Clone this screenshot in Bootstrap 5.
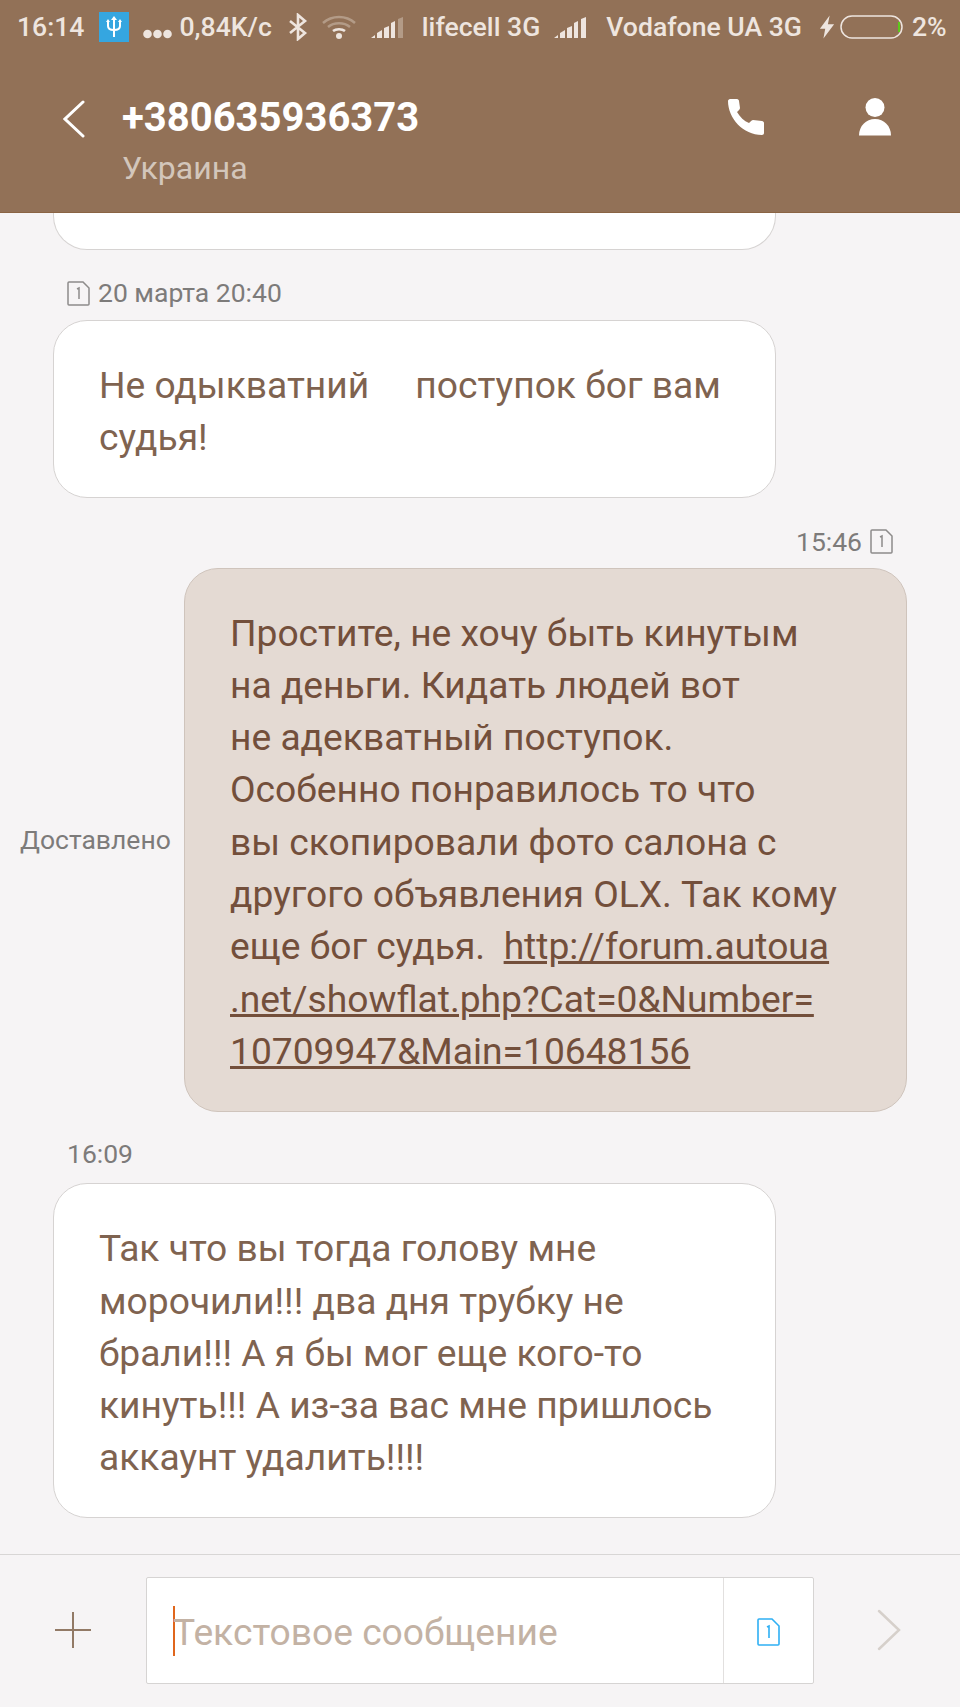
<!DOCTYPE html>
<html lang="ru">
<head>
<meta charset="utf-8">
<title>SMS</title>
<link href="https://cdn.jsdelivr.net/npm/bootstrap@5.3.0/dist/css/bootstrap.min.css" rel="stylesheet">
<style>
html,body{height:100%;margin:0}
body{font-family:Roboto,"Noto Sans",sans-serif;background:#f6f4f5;width:960px;height:1707px;overflow:hidden}
.shell{height:1707px}
.topbar{background:#927157;height:213px;flex:none;border-bottom:1px solid #8a6444}
.statusline{height:54px;padding:0 0 0 17px;color:#eee5df;font-size:26.6px;font-weight:500;white-space:nowrap}
.usbbox{width:30px;height:30px;background:#35a6e0;margin:0 14px 0 15px}
.dotline{margin:14px 7px 0 0}
.sgap5{margin-left:5px}
.sgap8{margin-left:8px}
.sgap13{margin-left:13px}
.sgap14{margin-left:14px}
.sgap16{margin-left:16px}
.sgap17{margin-left:17px}
.sgap18{margin-left:18px}
.titlerow{padding:41px 0 0 63px}
.backwrap{width:59px;padding-top:5px}
.phone-no{font-size:40px;font-weight:700;color:#fff;line-height:46px}
.region{font-size:32px;color:#d3c6bb;line-height:36px;margin-top:9px}
.call-ico{position:absolute;left:728px;top:98px}
.person-ico{position:absolute;left:859px;top:98px}
.convo{padding:0 53px;height:1341px;overflow:hidden}
.bubble{width:723px;background:#fff;border:1px solid #d6d3d2;border-radius:34px;padding:38px 45px 33px;font-size:37.2px;line-height:52.3px;color:#7f6350;white-space:nowrap}
.bubble-stub{height:38px;margin-top:-1px;border-top:0;border-radius:0 0 34px 34px;padding:0}
.stamp{font-size:26.5px;color:#7d7b7a;line-height:30px;margin-left:14px;height:30px}
.stamp-first{margin-top:28px;margin-bottom:12px}
.stamp-late{margin-top:27px;margin-bottom:14px}
.mine{background:#e4dad3;border-color:#cfc4bc;color:#734f3b;padding-bottom:34px}
.mine a{color:#734f3b}
.sentstamp{margin:29px 14px 11px 14px;justify-content:flex-end}
.deliv{font-size:26.5px;color:#7d7b7a;margin-left:-33px;margin-right:13px;width:151px;flex:none;white-space:nowrap}
.composer{height:153px;flex:none;border-top:1px solid #d8d6d5;padding:22px 0 0 0}
.plusbox{width:146px;height:106px}
.inputbox{width:668px;height:107px;background:#fff;border:1px solid #d6d4d3;border-radius:2px}
.caret-mark{width:2px;height:50px;background:#e0661c;margin-left:26px;flex:none}
.hint-text{font-size:37.2px;color:#c3b2a4;line-height:50px;margin:3px 0 0 -2px}
.siminput{width:90px;border-left:1px solid #e2e0df;padding-top:3px}
.sendbox{width:146px;height:106px;padding-left:4px}
</style>
</head>
<body>
<div class="shell d-flex flex-column position-relative">
  <header class="topbar position-relative">
    <div class="statusline d-flex align-items-center">
      <span>16:14</span>
      <span class="usbbox d-flex align-items-center justify-content-center">
        <svg width="18" height="22" viewBox="0 0 18 22" fill="none" stroke="#fff" stroke-width="2"><path d="M9 3v18M3 6v4c0 3 2.500 4 6 4s6-1 6-4V6"/><path d="M9 0l3 4H6zM3 3l2 3H1zM15 3l2 3h-4z" fill="#fff" stroke="none"/></svg>
      </span>
      <svg class="dotline" width="29" height="10" viewBox="0 0 29 10" fill="#eee5df"><circle cx="4.500" cy="5" r="4.300"/><circle cx="14.500" cy="5" r="4.300"/><circle cx="24.500" cy="5" r="4.300"/></svg>
      <span>0,84K/c</span>
      <svg class="sgap16" width="20" height="28" viewBox="0 0 20 28" fill="none" stroke="#eee5df" stroke-width="2.600"><path d="M2 8l15 12-7 6V2l7 6L2 20"/></svg>
      <svg class="sgap13" width="36" height="24" viewBox="0 0 36 24" fill="none"><path d="M2 8c9-8 23-8 32 0" stroke="#b39b87" stroke-width="2.500"/><path d="M7 12c6-5 16-5 22 0" stroke="#b39b87" stroke-width="2.500"/><path d="M12 16c3-2.500 9-2.500 12 0" stroke="#eee5df" stroke-width="2.500"/><circle cx="18" cy="21" r="3" fill="#eee5df"/></svg>
      <svg class="sgap14" width="34" height="24" viewBox="0 0 34 24" fill="#eee5df"><path d="M0 23l4-3v3zM6 18l5-3v8H6zM13 13l5-2v12h-5zM20 8l4-2v17h-4z"/><path d="M27 4l5-2v21h-5z" fill="#b39b87"/></svg>
      <span class="sgap17">lifecell 3G</span>
      <svg class="sgap14" width="34" height="24" viewBox="0 0 34 24" fill="#eee5df"><path d="M0 23l4-3v3zM6 18l5-3v8H6zM13 13l5-2v12h-5zM20 8l4-2v17h-4zM27 4l5-2v21h-5z"/></svg>
      <span class="sgap18">Vodafone UA 3G</span>
      <svg class="sgap17" width="16" height="28" viewBox="0 0 18 28" fill="#eee5df"><path d="M12 1L1 16h6L5 27l12-16h-7z"/></svg>
      <svg class="sgap5" width="64" height="24" viewBox="0 0 64 24" fill="none"><rect x="1" y="1" width="61" height="22" rx="11" stroke="#eee5df" stroke-width="1.500"/><rect x="58" y="7" width="2" height="10" fill="#5cc81a"/></svg>
      <span class="sgap8">2%</span>
    </div>
    <div class="titlerow d-flex">
      <div class="backwrap">
        <svg width="22" height="38" viewBox="0 0 22 38" fill="none" stroke="#fff" stroke-width="3" stroke-linecap="round"><path d="M20 2L2 19l18 17"/></svg>
      </div>
      <div>
        <div class="phone-no">+380635936373</div>
        <div class="region">Украина</div>
      </div>
    </div>
    <svg class="call-ico" width="38" height="39" viewBox="0 0 38 39" fill="#fff"><path d="M2 1h7c1 0 2 1 2 2l1 7c0 1-1 2-3 4 3 5 7 9 12 11 2-2 3-3 4-3l9 1c1 0 2 1 2 2v10c0 1-1 2-2 2C15 37 0 20 0 3c0-1 1-2 2-2z"/></svg>
    <svg class="person-ico" width="32" height="38" viewBox="0 0 32 38" fill="#fff"><circle cx="16" cy="9.500" r="9.500"/><path d="M0 37.500C0 28 7 21 16 21s16 7 16 16.500z"/></svg>
  </header>

  <main class="convo flex-grow-1">
    <div class="bubble bubble-stub"></div>
    <div class="stamp stamp-first d-flex align-items-center gap-2">
      <svg width="23" height="25" viewBox="0 0 23 25" fill="none" stroke="#8d8b8a" stroke-width="1.500"><path d="M2 1h14l6 6v16a1 1 0 0 1-1 1H2a1 1 0 0 1-1-1V2a1 1 0 0 1 1-1zM10 8l2-1v11"/></svg>
      <span>20 марта 20:40</span>
    </div>
    <div class="bubble">Не одыкватний &nbsp; &nbsp; поступок бог вам<br>судья!</div>

    <div class="stamp sentstamp d-flex align-items-center gap-2">
      <span>15:46</span>
      <svg width="23" height="25" viewBox="0 0 23 25" fill="none" stroke="#8d8b8a" stroke-width="1.500"><path d="M2 1h14l6 6v16a1 1 0 0 1-1 1H2a1 1 0 0 1-1-1V2a1 1 0 0 1 1-1zM10 8l2-1v11"/></svg>
    </div>
    <div class="d-flex align-items-center">
      <div class="deliv">Доставлено</div>
      <div class="bubble mine flex-shrink-0">Простите, не хочу быть кинутым<br>на деньги. Кидать людей вот<br>не адекватный поступок.<br>Особенно понравилось то что<br>вы скопировали фото салона с<br>другого объявления OLX. Так кому<br>еще бог судья. &nbsp;<a href="#">http://forum.autoua<br>.net/showflat.php?Cat=0&amp;Number=<br>10709947&amp;Main=10648156</a></div>
    </div>

    <div class="stamp stamp-late"><span>16:09</span></div>
    <div class="bubble">Так что вы тогда голову мне<br>морочили!!! два дня трубку не<br>брали!!! А я бы мог еще кого-то<br>кинуть!!! А из-за вас мне пришлось<br>аккаунт удалить!!!!</div>
  </main>

  <footer class="composer d-flex align-items-start">
    <div class="plusbox d-flex justify-content-center align-items-center">
      <svg width="36" height="36" viewBox="0 0 36 36" stroke="#927a66" stroke-width="2"><path d="M18 0v36M0 18h36"/></svg>
    </div>
    <div class="inputbox d-flex">
      <div class="flex-grow-1 d-flex align-items-center">
        <span class="caret-mark"></span>
        <span class="hint-text">Текстовое сообщение</span>
      </div>
      <div class="siminput d-flex align-items-center justify-content-center">
        <svg width="23" height="28" viewBox="0 0 23 28" fill="none" stroke="#2fb0f4" stroke-width="1.600"><path d="M2 1h13l7 7v18a1 1 0 0 1-1 1H2a1 1 0 0 1-1-1V2a1 1 0 0 1 1-1zM10 9l2-1v12"/></svg>
      </div>
    </div>
    <div class="sendbox d-flex justify-content-center align-items-center">
      <svg width="24" height="42" viewBox="0 0 24 42" fill="none" stroke="#d6d0cb" stroke-width="2.500" stroke-linecap="round"><path d="M2 2l20 19L2 40" /></svg>
    </div>
  </footer>
</div>
<script src="https://cdn.jsdelivr.net/npm/bootstrap@5.3.0/dist/js/bootstrap.bundle.min.js"></script>
</body>
</html>
